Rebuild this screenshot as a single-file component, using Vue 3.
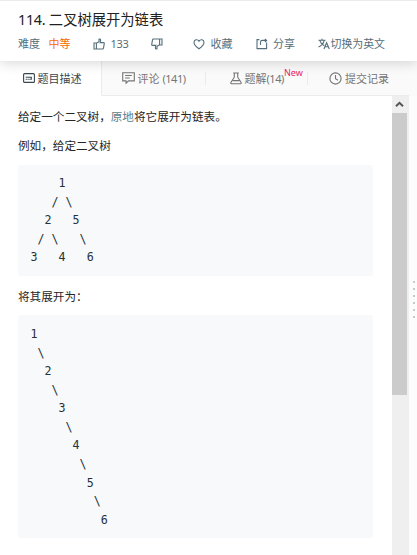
<script setup>
const tree = [
  '    1',
  '   / \\',
  '  2   5',
  ' / \\   \\',
  '3   4   6',
].join('\n')

const list = [1, 2, 3, 4, 5, 6]
  .map((n, i) => ' '.repeat(i * 2) + n + (i < 5 ? '\n' + ' '.repeat(i * 2 + 1) + '\\' : ''))
  .join('\n')
</script>

<template>
  <div class="page">
    <header class="header">
      <h1 class="title"><span class="number">114. </span>二叉树展开为链表</h1>
      <div class="meta">
        <span class="item level-label">难度</span>
        <span class="item level">中等</span>
        <span class="item like">
          <svg width="12" height="12" viewBox="0 0 12 12"><path d="M1 5h2.4v6H1zM3.4 5.2 6 3.6V1.2q1.7-.5 1.7 1.3L7.2 4.6h3.5q.7 0 .6.8l-.8 4.7q-.2.9-1 .9H3.4" /></svg>
          <span class="count">133</span>
        </span>
        <span class="item dislike">
          <svg width="12" height="12" viewBox="0 0 12 12"><path d="M11 7H8.6V1H11zM8.6 6.8 6 8.4v2.4q-1.7.5-1.7-1.3l.5-2.1H1.3q-.7 0-.6-.8l.8-4.7q.2-.9 1-.9h6.1" /></svg>
        </span>
        <span class="item favorite">
          <svg width="12" height="12" viewBox="0 0 12 12"><path d="M6 10.7C2.6 8.2 1 6.5 1 4.4 1 1.5 4.5.8 6 3.2 7.5.8 11 1.5 11 4.4c0 2.1-1.6 3.8-5 6.3z" /></svg>
          <span>收藏</span>
        </span>
        <span class="item share">
          <svg width="12" height="12" viewBox="0 0 12 12"><path d="M3.4 1.6H1v9h9.6V4.6M4.5 7V4.2q0-1.8 1.8-1.8h4.2M8.9.8l1.7 1.6L8.9 4" /></svg>
          <span>分享</span>
        </span>
        <span class="item translate">
          <svg width="12" height="12" viewBox="0 0 12 12"><path d="M.5 2.2h7M4 .7v1.5M1.7 2.4C2.5 5 4.2 6.8 6.3 7.7M6.2 2.4C5.5 5.5 3.5 7.8.5 9.1M6 11l2.6-6.3L11.3 11M6.9 8.8h3.5" /></svg>
          <span>切换为英文</span>
        </span>
      </div>
    </header>

    <nav class="tabs">
      <div class="tab active">
        <svg width="12" height="12" viewBox="0 0 12 12"><rect x=".6" y="1.6" width="10.8" height="8.8" rx="1" /><path d="M2.7 7.4h1M4.6 7.4h1M6.5 7.4h1M8.3 7.8V5.2H2.7" /></svg>
        <span>题目描述</span>
      </div>
      <div class="tab comments">
        <svg width="13" height="12" viewBox="0 0 13 12"><path d="M.7.7h11.6v8.2H6.6L4.1 11.2V8.9H.7zM3.1 3.5h6.7M3.1 6h4.7" /></svg>
        <span>评论 <span class="num">(141)</span></span>
      </div>
      <div class="tab solutions">
        <svg width="12" height="13" viewBox="0 0 12 13"><path d="M3.2 1h5.6M4.3 1v4.2L.9 10.4q-.5 1.4 1 1.4h8.2q1.5 0 1-1.4L7.7 5.2V1M2.8 8.6h6.5" /></svg>
        <span class="label">题解<span class="num">(14)</span></span><sup class="new">New</sup>
      </div>
      <div class="tab history">
        <svg width="13" height="13" viewBox="0 0 13 13"><circle cx="6.5" cy="6.5" r="5.6" /><path d="M6.5 3v3.8l2.5 1.5" /></svg>
        <span>提交记录</span>
      </div>
    </nav>

    <div class="body">
      <main class="content">
        <p>给定一个二叉树，<span class="term">原地</span>将它展开为链表。</p>
        <p>例如，给定二叉树</p>
        <pre>{{ tree }}</pre>
        <p class="after">将其展开为：</p>
        <pre>{{ list }}</pre>
      </main>
      <div class="scrollbar">
        <div class="arrow">
          <svg width="9" height="7" viewBox="0 0 9 7"><path d="M1 5.3 4.5 1.9 8 5.3" /></svg>
        </div>
        <div class="thumb"></div>
      </div>
      <div class="gutter">
        <i v-for="n in 6" :key="n"></i>
      </div>
    </div>
  </div>
</template>

<style>
body {
  background: #fff;
  overflow: hidden;
}
</style>

<style scoped>
.page {
  width: 417px;
  height: 555px;
  display: flex;
  flex-direction: column;
  overflow: hidden;
  background: #fff;
  color: #262626;
  font-family: "Noto Sans", "Noto Sans CJK SC", sans-serif;
  font-size: 11px;
}
svg {
  display: block;
  flex: none;
  fill: none;
  stroke: currentColor;
  stroke-width: 1.1;
}
.header {
  box-sizing: border-box;
  height: 61px;
  flex: none;
  border-top: 1px solid #ebebeb;
  padding: 8px 0 0 18px;
  background: #fff;
  box-shadow: 0 2px 12px rgba(0, 0, 0, 0.16);
  z-index: 1;
}
.title {
  margin: 0;
  font-size: 14.3px;
  line-height: 22px;
  font-weight: 400;
  color: #212121;
  white-space: nowrap;
}
.number {
  letter-spacing: -0.25px;
}
.meta {
  display: flex;
  align-items: center;
  height: 16px;
  margin-top: 5px;
  color: #546e7a;
  line-height: 16px;
  white-space: nowrap;
}
.item {
  display: flex;
  align-items: center;
  flex: none;
}
.level-label {
  width: 30.5px;
}
.level {
  width: 44.5px;
  color: #f76b00;
}
.like {
  width: 58px;
  gap: 5.5px;
}
.count {
  letter-spacing: -0.3px;
}
.dislike {
  width: 42px;
}
.favorite {
  width: 63px;
  gap: 5.5px;
}
.share {
  width: 62px;
  gap: 5px;
}
.translate {
  gap: 0.5px;
  font-size: 10.9px;
}
.tabs {
  display: flex;
  flex: none;
  height: 35px;
  background: #fafafa;
  padding-right: 8px;
}
.tab {
  box-sizing: border-box;
  display: flex;
  align-items: center;
  gap: 3px;
  border-bottom: 1px solid #ebebeb;
  color: #757575;
  white-space: nowrap;
}
.active {
  width: 102px;
  padding-left: 22.5px;
  border-right: 1px solid #ebebeb;
  border-bottom-color: #fff;
  background: #fff;
  color: #37474f;
}
.comments {
  width: 104px;
  padding-left: 20px;
  gap: 2.5px;
}
.solutions {
  width: 102px;
  padding-left: 23.5px;
}
.comments,
.solutions {
  background: linear-gradient(#ebebeb, #ebebeb) right 11px / 1px 13px no-repeat;
}
.num {
  letter-spacing: -0.45px;
}
.label {
  margin-right: -3px;
}
.new {
  align-self: flex-start;
  margin-top: 6px;
  font-size: 9px;
  line-height: 12px;
  color: #e91e63;
}
.history {
  flex: 1;
  padding-left: 21px;
}
.body {
  display: flex;
  flex: 1;
  min-height: 0;
}
.content {
  box-sizing: border-box;
  width: 392px;
  padding: 11px 19px 0 18px;
}
p {
  margin: 0 0 9px;
  font-size: 11.6px;
  line-height: 20px;
}
.content .after {
  margin: 11px 0 8px;
}
.term {
  color: #607d8b;
}
pre {
  margin: 0;
  padding: 9.1px 12.5px;
  border-radius: 3px;
  background: #f7f9fb;
  color: #263238;
  font: 11.67px/18.57px "DejaVu Sans Mono", monospace;
}
.content .after + pre {
  padding-top: 10px;
  padding-bottom: 8.7px;
}
.scrollbar {
  width: 17px;
  background: #efefef;
}
.arrow {
  width: 15px;
  height: 17px;
  display: flex;
  align-items: center;
  justify-content: center;
  color: #555;
}
.arrow svg {
  stroke-width: 2;
}
.thumb {
  width: 15px;
  height: 282px;
  background: #cbcbcb;
}
.gutter {
  box-sizing: border-box;
  flex: 1;
  display: flex;
  flex-direction: column;
  align-items: center;
  gap: 5px;
  padding: 185px 0 0 2px;
  background: #fcfcfc;
}
.gutter i {
  width: 2px;
  height: 2px;
  background: #c2cccb;
}
</style>
